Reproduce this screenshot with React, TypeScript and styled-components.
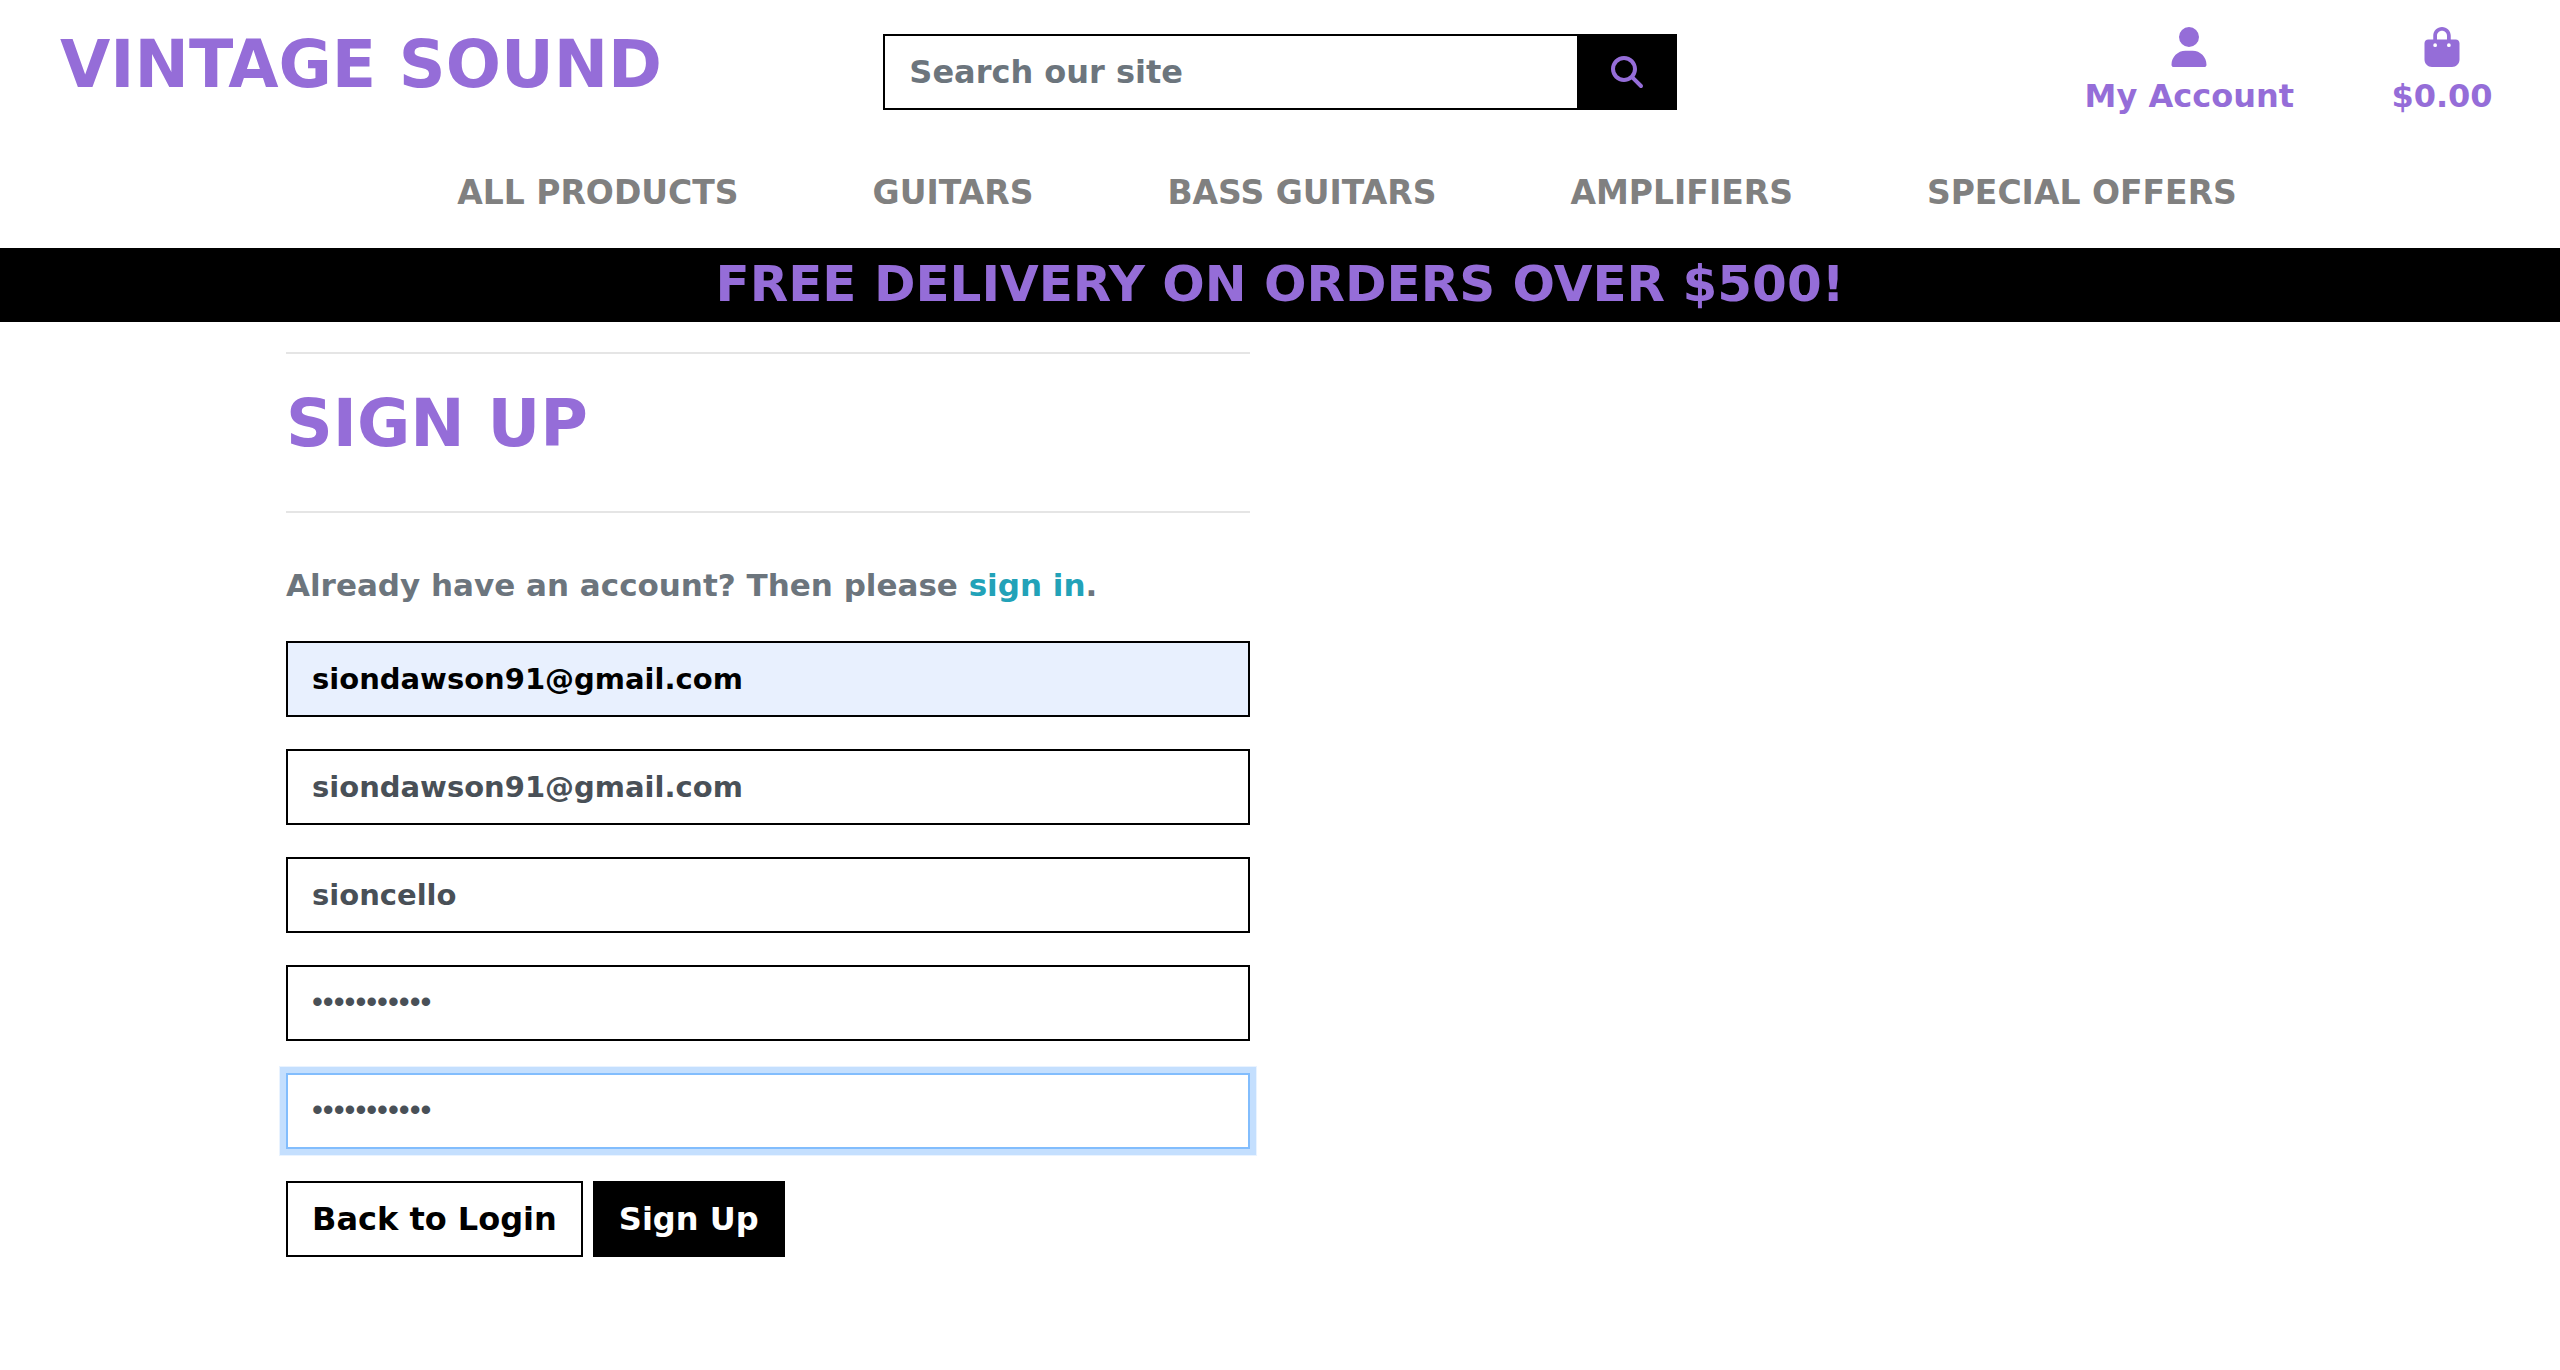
import React, { useState } from "react";
import styled, { createGlobalStyle, css } from "styled-components";
import { FaUser, FaBagShopping, FaMagnifyingGlass } from "react-icons/fa6";

const purple = "#956dd8";
const black = "#000000";
const slate = "#495057";
const muted = "#6c757d";

const GlobalStyle = createGlobalStyle`
  *, *::before, *::after { box-sizing: border-box; }
  body {
    margin: 0;
    background: #ffffff;
    color: ${black};
    font-family: "DejaVu Sans", Verdana, sans-serif;
    font-size: 32px;
    font-weight: 700;
    line-height: 48px;
  }
  input, button { font: inherit; }
`;

const TopBar = styled.div`
  display: grid;
  grid-template-columns: repeat(3, minmax(0, 1fr));
  align-items: start;
  padding-top: 27px;
`;

const TopCell = styled.div`
  padding: 0 30px;
`;

const Brand = styled.a`
  display: block;
  padding-left: 30px;
  color: ${purple};
  font-size: 65px;
  line-height: 76px;
  text-decoration: none;
  white-space: nowrap;
`;

const SearchForm = styled.form`
  display: flex;
  margin-top: 7px;
`;

const fieldBox = css`
  display: block;
  height: 76px;
  padding: 12px 24px;
  border: 2px solid ${black};
  border-radius: 0;
  outline: none;
`;

const SearchInput = styled.input`
  ${fieldBox}
  flex: 1;
  min-width: 0;
  border-right: 0;
  color: ${slate};
  background: #ffffff;

  &::placeholder {
    color: ${muted};
    opacity: 1;
  }
`;

const SearchButton = styled.button`
  display: flex;
  align-items: center;
  justify-content: center;
  width: 100px;
  border: 0;
  background: ${black};
  color: ${purple};
  font-size: 32px;
`;

const Shortcuts = styled.nav`
  display: flex;
  justify-content: flex-end;
  gap: 92px;
  padding-right: 32px;
`;

const Shortcut = styled.a`
  display: flex;
  flex-direction: column;
  align-items: center;
  gap: 5px;
  min-width: 112px;
  color: ${purple};
  text-decoration: none;
  white-space: nowrap;

  svg {
    height: 40px;
    width: auto;
  }
`;

const MainNav = styled.nav`
  display: flex;
  justify-content: center;
  gap: 134px;
  padding: 49px 0 31px 134px;
`;

const NavLink = styled.a`
  color: #808080;
  font-size: 33px;
  text-decoration: none;
  white-space: nowrap;
`;

const Banner = styled.div`
  padding: 6px 0 8px;
  background: ${black};
  color: ${purple};
  font-size: 50px;
  line-height: 60px;
  text-align: center;
`;

const Main = styled.main`
  width: 80%;
  margin: 0 auto;
`;

const Column = styled.section`
  width: 50%;
  padding: 30px;
`;

const Rule = styled.hr`
  margin: 0;
  border: 0;
  border-top: 2px solid #e5e5e5;
`;

const Title = styled.h1`
  margin: 32px 0 49px;
  color: ${purple};
  font-size: 65px;
  line-height: 76px;
`;

const Intro = styled.p`
  margin: 48px 0 32px;
  color: ${muted};
  font-size: 31px;
  white-space: nowrap;
`;

const InlineLink = styled.a`
  color: #22a2b8;
  text-decoration: none;
`;

const SignUpForm = styled.form`
  display: flex;
  flex-direction: column;
  gap: 32px;
`;

const Field = styled.input<{ $filled?: boolean; $active?: boolean }>`
  ${fieldBox}
  width: 100%;
  color: ${(p) => (p.$filled ? black : slate)};
  background: ${(p) => (p.$filled ? "#e8f0fe" : "#ffffff")};
  font-size: 29px;

  &[type="password"] {
    padding-bottom: 15px;
    font-family: "Liberation Sans", Arial, sans-serif;
    font-size: 31px;
    font-weight: 400;
  }

  ${(p) =>
    p.$active &&
    css`
      border-color: #82bdfd;
      box-shadow: 0 0 0 6px #c4dffe, 0 0 0 7px #e9f3ff;
    `}
`;

const Actions = styled.div`
  display: flex;
  gap: 10px;
`;

const ActionButton = styled.button<{ $solid?: boolean }>`
  height: 76px;
  padding: 0 24px;
  border: 2px solid ${black};
  background: ${(p) => (p.$solid ? black : "#ffffff")};
  color: ${(p) => (p.$solid ? "#ffffff" : black)};
  white-space: nowrap;
`;

const categories = [
  "ALL PRODUCTS",
  "GUITARS",
  "BASS GUITARS",
  "AMPLIFIERS",
  "SPECIAL OFFERS",
];

const fields = [
  { id: "email", label: "E-mail", type: "email", value: "siondawson91@gmail.com", filled: true },
  { id: "email2", label: "E-mail confirmation", type: "email", value: "siondawson91@gmail.com" },
  { id: "username", label: "Username", type: "text", value: "sioncello" },
  { id: "password1", label: "Password", type: "password", value: "guitarsound" },
  { id: "password2", label: "Password again", type: "password", value: "guitarsound" },
];

export default function App() {
  const [active, setActive] = useState("password2");

  return (
    <>
      <GlobalStyle />
      <header>
        <TopBar>
          <TopCell>
            <Brand href="#home">VINTAGE SOUND</Brand>
          </TopCell>
          <TopCell>
            <SearchForm role="search" onSubmit={(e) => e.preventDefault()}>
              <SearchInput type="text" aria-label="Search our site" placeholder="Search our site" />
              <SearchButton type="submit" aria-label="Search">
                <FaMagnifyingGlass />
              </SearchButton>
            </SearchForm>
          </TopCell>
          <TopCell>
            <Shortcuts aria-label="Account">
              <Shortcut href="#account">
                <FaUser />
                My Account
              </Shortcut>
              <Shortcut href="#bag">
                <FaBagShopping />
                $0.00
              </Shortcut>
            </Shortcuts>
          </TopCell>
        </TopBar>
        <MainNav aria-label="Products">
          {categories.map((name) => (
            <NavLink key={name} href="#products">
              {name}
            </NavLink>
          ))}
        </MainNav>
      </header>
      <Banner>FREE DELIVERY ON ORDERS OVER $500!</Banner>
      <Main>
        <Column>
          <Rule />
          <Title>SIGN UP</Title>
          <Rule />
          <Intro>
            Already have an account? Then please <InlineLink href="#login">sign in</InlineLink>.
          </Intro>
          <SignUpForm onSubmit={(e) => e.preventDefault()}>
            {fields.map((f) => (
              <Field
                key={f.id}
                id={f.id}
                type={f.type}
                aria-label={f.label}
                defaultValue={f.value}
                $filled={f.filled}
                $active={active === f.id}
                onFocus={() => setActive(f.id)}
              />
            ))}
            <Actions>
              <ActionButton type="button">Back to Login</ActionButton>
              <ActionButton type="submit" $solid>
                Sign Up
              </ActionButton>
            </Actions>
          </SignUpForm>
        </Column>
      </Main>
    </>
  );
}
